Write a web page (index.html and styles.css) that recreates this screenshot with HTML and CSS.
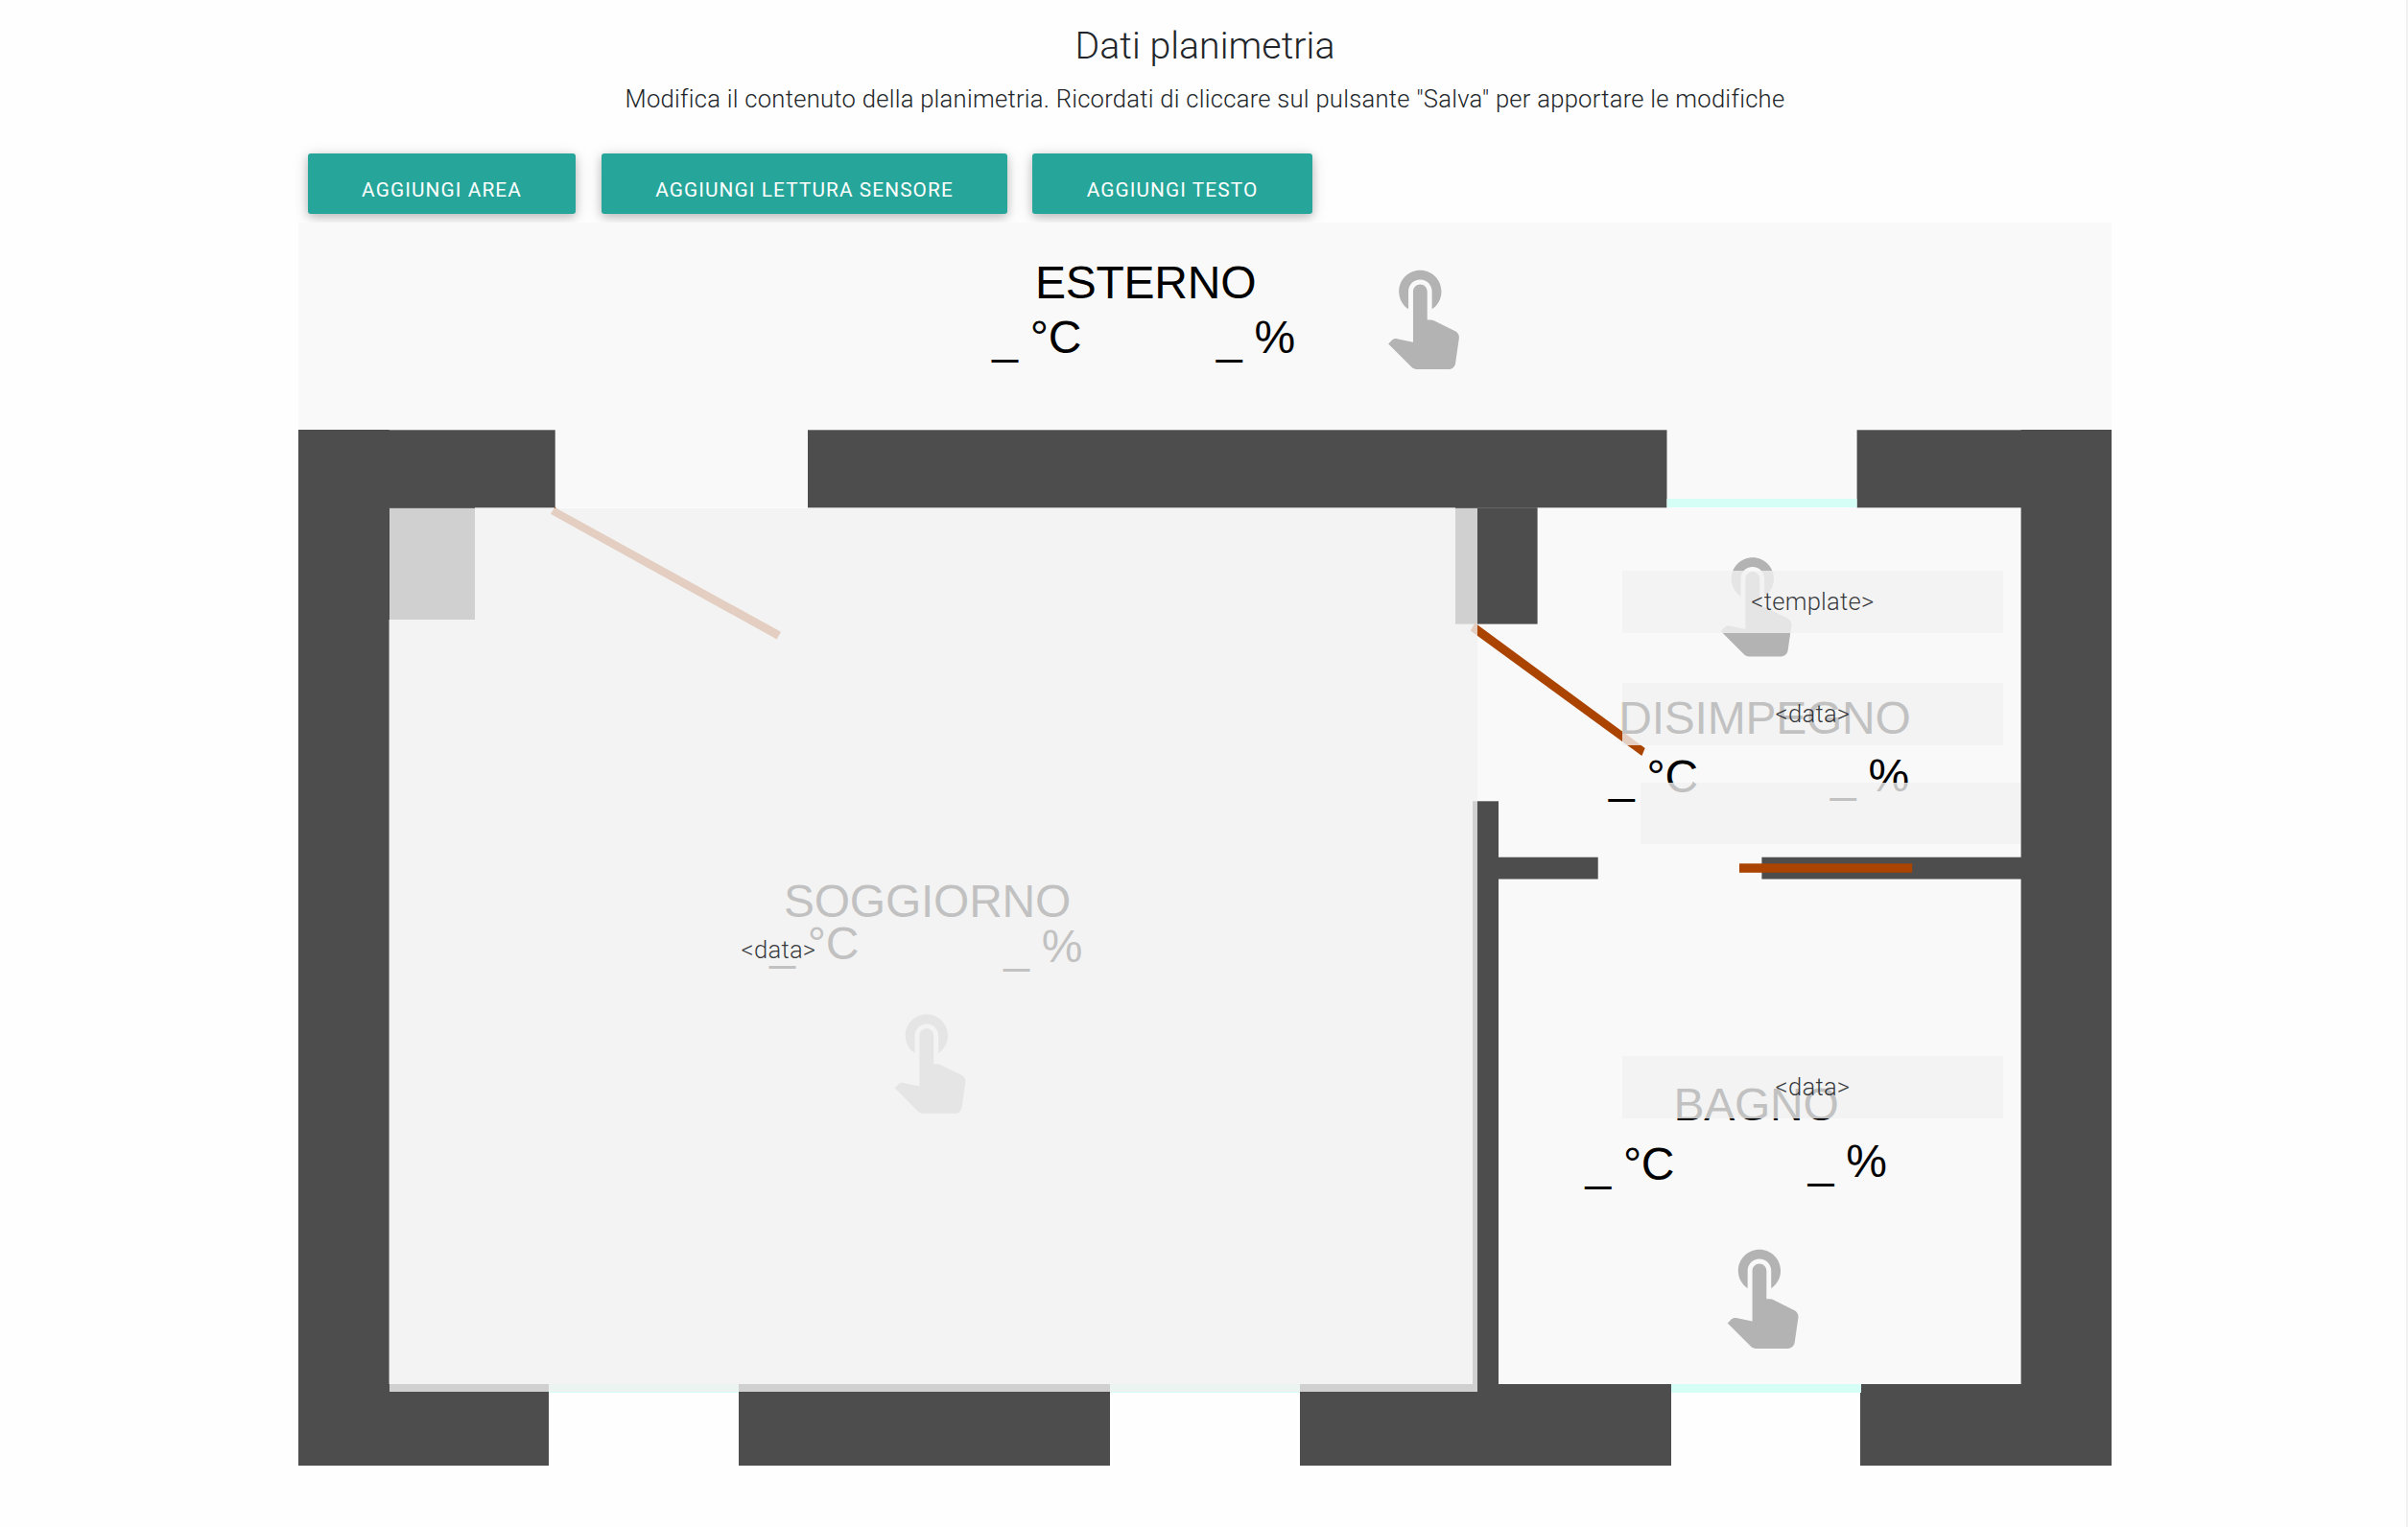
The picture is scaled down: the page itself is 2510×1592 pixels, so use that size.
FILE: index.html
```html
<!DOCTYPE html>
<html lang="it">
<head>
<meta charset="utf-8">
<title>Dati planimetria</title>
<link rel="stylesheet" href="styles.css">
</head>
<body>
<main class="page">
  <header class="intro">
    <h1 class="title">Dati planimetria</h1>
    <p class="subtitle">Modifica il contenuto della planimetria. Ricordati di cliccare sul pulsante "Salva" per apportare le modifiche</p>
  </header>
  <div class="toolbar">
    <button class="btn btn-area">Aggiungi area</button>
    <button class="btn btn-sensor">Aggiungi lettura sensore</button>
    <button class="btn btn-text">Aggiungi testo</button>
  </div>
  <section class="plan">
    <svg class="drawing" viewBox="311 232 1890 1296" width="1890" height="1296">
      <defs>
        <path id="touch" d="M9 11.24V7.5C9 6.12 10.12 5 11.5 5S14 6.12 14 7.5v3.74c1.21-.81 2-2.18 2-3.74C16 5.01 13.99 3 11.5 3S7 5.01 7 7.5c0 1.56.79 2.93 2 3.74zm9.84 4.63l-4.54-2.26c-.17-.07-.35-.11-.54-.11H13v-6c0-.83-.67-1.5-1.5-1.5S10 6.67 10 7.5v10.74l-3.43-.72c-.08-.01-.15-.03-.24-.03-.31 0-.59.13-.79.33l-.79.8 4.94 4.94c.27.27.65.44 1.06.44h6.79c.75 0 1.33-.55 1.44-1.28l.75-5.27c.01-.07.02-.14.02-.2 0-.62-.38-1.16-.91-1.38z"/>
      </defs>
      <g class="floor">
        <rect x="311" y="232" width="1890" height="297"/>
        <rect x="405" y="529.7" width="1702" height="913.3"/>
      </g>
      <g class="wall">
        <rect x="311" y="448" width="94.6" height="1080"/>
        <rect x="405" y="448.3" width="173.7" height="81"/>
        <rect x="842" y="448.3" width="895.5" height="81"/>
        <rect x="1935.6" y="448.3" width="171.4" height="81"/>
        <rect x="2106.6" y="448" width="94.4" height="1080"/>
        <rect x="405" y="529.2" width="90" height="116.8"/>
        <rect x="1517" y="529.2" width="85.6" height="121.4"/>
        <rect x="1535" y="835.3" width="27" height="608"/>
        <rect x="1562" y="893.7" width="103.7" height="22.8"/>
        <rect x="1836.4" y="893.7" width="270.6" height="22.8"/>
        <rect x="405" y="1443" width="167" height="85"/>
        <rect x="770" y="1443" width="387" height="85"/>
        <rect x="1355" y="1443" width="387" height="85"/>
        <rect x="1939" y="1443" width="168" height="85"/>
      </g>
      <g class="window">
        <rect x="1737.5" y="520" width="198" height="9"/>
        <rect x="572" y="1443" width="198" height="9"/>
        <rect x="1157" y="1443" width="198" height="9"/>
        <rect x="1742" y="1443" width="198" height="9"/>
      </g>
      <g class="door">
        <path d="M578.3 529L814 658.7L809.8 666.5L573.8 535.8Z"/>
        <path d="M1537.5 649.5L1714.7 780L1711.4 788L1532.7 657.6Z"/>
        <rect x="1813" y="900.3" width="180.2" height="9.5"/>
      </g>
      <g class="touch">
        <use href="#touch" transform="translate(1423.8 267) scale(4.917)"/>
        <use href="#touch" transform="translate(1770.3 566.4) scale(4.917)"/>
        <use href="#touch" transform="translate(909.3 1042.8) scale(4.917)"/>
        <use href="#touch" transform="translate(1777.4 1287.9) scale(4.917)"/>
      </g>
      <g class="label">
        <text x="1079" y="311.4">ESTERNO</text>
        <text x="1034.3" y="368.4">_ °C</text>
        <text x="1268" y="368.4">_ %</text>
        <text x="1687.3" y="765.4">DISIMPEGNO</text>
        <text x="1677" y="826">_ °C</text>
        <text x="1908" y="825">_ %</text>
        <text x="817" y="956.4">SOGGIORNO</text>
        <text x="802.3" y="1000.4">_ °C</text>
        <text x="1046.3" y="1003.4">_ %</text>
        <text x="1744.5" y="1168">BAGNO</text>
        <text x="1652.4" y="1230">_ °C</text>
        <text x="1884.7" y="1227.4">_ %</text>
      </g>
    </svg>
    <div class="area area-soggiorno">&lt;data&gt;</div>
    <div class="area area-template">&lt;template&gt;</div>
    <div class="area area-disimpegno">&lt;data&gt;</div>
    <div class="area area-empty"></div>
    <div class="area area-bagno">&lt;data&gt;</div>
  </section>
</main>
</body>
</html>
```
FILE: styles.css
```css
* { box-sizing: border-box; }

body {
  margin: 0;
  background: #fefefe;
  color: #212529;
  font-family: Roboto, "Liberation Sans", sans-serif;
  font-weight: 300;
  font-size: 25.6px;
  letter-spacing: .26px;
}

.page {
  min-height: 1592px;
  padding: 0 307px 0 311px;
  border-right: 2px solid #f1f1f1;
}

.intro {
  height: 160px;
  padding-top: 25px;
  text-align: center;
}

.title {
  margin: 0;
  font-size: 39.2px;
  font-weight: 300;
  line-height: 46px;
  letter-spacing: .05px;
}

.subtitle {
  margin: 13px 0 0;
  line-height: 38px;
  white-space: nowrap;
}

.toolbar {
  display: flex;
  height: 72px;
  padding-left: 10px;
}

.btn {
  height: 63px;
  padding: 12px 0 0;
  border: 0;
  border-radius: 3px;
  background: #26a69a;
  box-shadow: 0 3px 8px rgba(0, 0, 0, .16), 0 3px 16px rgba(0, 0, 0, .17);
  color: #fff;
  font: 400 20.8px/24px Roboto, "Liberation Sans", sans-serif;
  letter-spacing: 1.1px;
  text-transform: uppercase;
  white-space: nowrap;
}

.btn-area { width: 279px; }
.btn-sensor { width: 423px; margin-left: 27px; }
.btn-text { width: 292px; margin-left: 26px; }

.plan {
  position: relative;
  width: 1890px;
  height: 1296px;
}

.drawing { display: block; }

.floor { fill: #f9f9f9; }
.wall { fill: #4d4d4d; }
.window { fill: #d5fff6; }
.door { fill: #a40; }
.touch { fill: #b3b3b3; }

.label {
  fill: #000;
  font-family: "Liberation Sans", Arial, sans-serif;
  font-size: 48px;
  font-weight: 400;
  letter-spacing: -.25px;
}

.area {
  position: absolute;
  display: flex;
  align-items: center;
  justify-content: center;
  width: 397px;
  height: 65px;
  padding-bottom: 2px;
  background: rgba(241, 241, 241, .8);
  color: rgba(20, 22, 26, .85);
}

.area-soggiorno {
  left: 95px;
  top: 298px;
  width: 1134px;
  height: 921px;
  padding-right: 323px;
}

.area-template { left: 1380px; top: 363px; }
.area-disimpegno { left: 1380px; top: 480px; }
.area-empty { left: 1399px; top: 584px; width: 396px; height: 64px; }
.area-bagno { left: 1380px; top: 869px; }
```
